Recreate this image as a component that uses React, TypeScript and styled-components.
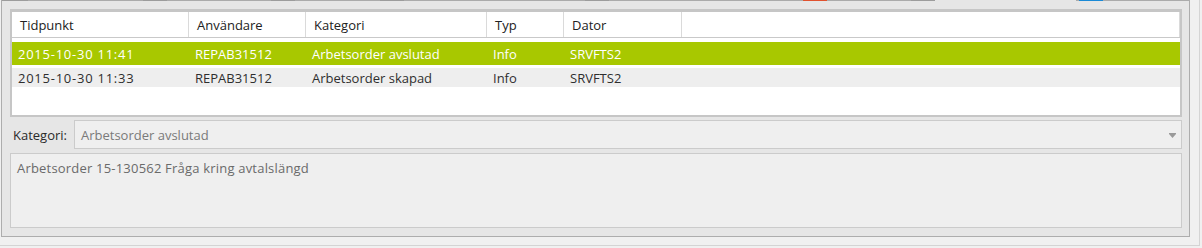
import React from "react";
import styled, { createGlobalStyle } from "styled-components";

const GlobalStyle = createGlobalStyle`
  html, body { margin: 0; padding: 0; background: #f0f0f0; }
  body { font-family: "Open Sans", "Noto Sans", sans-serif; font-size: 13px; }
  * { box-sizing: border-box; }
`;

const Frame = styled.div`
  width: 1200px;
  height: 246px;
  padding-left: 1px;
  border-right: 1px solid #d4d4d4;
  border-bottom: 1px solid #d4d4d4;
`;

const Panel = styled.div`
  width: 1189px;
  height: 237px;
  background: #e6e6e6;
  border-left: 1px solid #adadad;
  border-right: 1px solid #adadad;
  border-bottom: 1px solid #adadad;
  display: flex;
  flex-direction: column;
`;

const TopEdge = styled.div`
  height: 1px;
  display: flex;
  flex: none;
`;

const Segment = styled.div<{ $w: number; $c: string }>`
  width: ${(p) => p.$w}px;
  height: 1px;
  background: ${(p) => p.$c};
  flex: none;
`;

const Content = styled.div`
  flex: 1;
  padding: 8px 7px 8px 8px;
  display: flex;
  flex-direction: column;
`;

const Grid = styled.div`
  height: 108px;
  flex: none;
  border: 2px solid #c6c6c6;
  border-top-width: 3px;
  background: #ffffff;
  display: flex;
  flex-direction: column;
`;

const HeaderRow = styled.div`
  height: 26px;
  display: flex;
  border-bottom: 1px solid #c9c9c9;
  flex: none;
`;

const HeaderCell = styled.div<{ $w?: number }>`
  ${(p) => (p.$w ? `width: ${p.$w}px; flex: none;` : "flex: 1;")}
  border-right: 1px solid #dadada;
  padding-left: 8px;
  display: flex;
  align-items: center;
  color: #222;
  white-space: nowrap;
`;

const Rows = styled.div`
  flex: 1;
  padding-top: 4px;
  display: flex;
  flex-direction: column;
`;

const Row = styled.div<{ $selected?: boolean }>`
  display: flex;
  flex: none;
  height: ${(p) => (p.$selected ? 23 : 19)}px;
  margin-top: ${(p) => (p.$selected ? 0 : 3)}px;
  background: ${(p) => (p.$selected ? "#a8c800" : "#eeeeee")};
  color: ${(p) => (p.$selected ? "#ffffff" : "#2e2e2e")};
`;

const Cell = styled.div<{ $w?: number; $spacing?: number }>`
  ${(p) => (p.$w ? `width: ${p.$w}px; flex: none;` : "flex: 1;")}
  padding-left: 6px;
  display: flex;
  align-items: center;
  white-space: nowrap;
  letter-spacing: ${(p) => p.$spacing ?? 0}px;
`;

const FieldRow = styled.div`
  margin-top: 3px;
  height: 29px;
  display: flex;
  align-items: center;
  flex: none;
`;

const Label = styled.div`
  width: 64px;
  padding-left: 3px;
  color: #2a2a2a;
  flex: none;
`;

const Combo = styled.div`
  flex: 1;
  height: 29px;
  border: 1px solid #cbcbcb;
  background: #efefef;
  display: flex;
  align-items: center;
  padding: 0 5px 0 6px;
  color: #7a7a7a;
`;

const ComboText = styled.span`
  flex: 1;
`;

const Arrow = styled.svg`
  width: 7px;
  height: 5px;
  flex: none;
  margin-top: 1px;
`;

const TextBox = styled.div`
  margin-top: 4px;
  height: 75px;
  flex: none;
  border: 1px solid #cbcbcb;
  background: #efefef;
  padding: 5px 6px;
  color: #6a6a6a;
  line-height: 18px;
  letter-spacing: 0.2px;
`;

const edge: [number, string][] = [
  [26, "#9c9c9c"],
  [115, "#ababab"],
  [24, "#9c9c9c"],
  [104, "#ababab"],
  [24, "#9c9c9c"],
  [85, "#ababab"],
  [24, "#9c9c9c"],
  [181, "#ababab"],
  [24, "#9c9c9c"],
  [194, "#ababab"],
  [24, "#e0522f"],
  [84, "#ababab"],
  [24, "#9c9c9c"],
  [141, "#e6e6e6"],
  [3, "#ababab"],
  [24, "#1b8ad6"],
  [86, "#ababab"],
];

const cols = [
  { w: 177, title: "Tidpunkt", spacing: 0.75 },
  { w: 117, title: "Användare", spacing: 0 },
  { w: 181, title: "Kategori", spacing: 0 },
  { w: 77, title: "Typ", spacing: 0 },
  { w: 118, title: "Dator", spacing: 0 },
];

const data = [
  ["2015-10-30 11:41", "REPAB31512", "Arbetsorder avslutad", "Info", "SRVFTS2"],
  ["2015-10-30 11:33", "REPAB31512", "Arbetsorder skapad", "Info", "SRVFTS2"],
];

export default function App() {
  return (
    <>
      <GlobalStyle />
      <Frame>
        <Panel>
          <TopEdge>
            {edge.map(([w, c], i) => (
              <Segment key={i} $w={w} $c={c} />
            ))}
          </TopEdge>
          <Content>
            <Grid>
              <HeaderRow>
                {cols.map((c) => (
                  <HeaderCell key={c.title} $w={c.w}>
                    {c.title}
                  </HeaderCell>
                ))}
                <HeaderCell />
              </HeaderRow>
              <Rows>
                {data.map((r, i) => (
                  <Row key={i} $selected={i === 0}>
                    {r.map((v, j) => (
                      <Cell key={j} $w={cols[j].w} $spacing={cols[j].spacing}>
                        {v}
                      </Cell>
                    ))}
                    <Cell />
                  </Row>
                ))}
              </Rows>
            </Grid>
            <FieldRow>
              <Label>Kategori:</Label>
              <Combo>
                <ComboText>Arbetsorder avslutad</ComboText>
                <Arrow viewBox="0 0 7 5">
                  <path d="M0 0H7V1L3.5 5L0 1Z" fill="#9a9a9a" />
                </Arrow>
              </Combo>
            </FieldRow>
            <TextBox>Arbetsorder 15-130562 Fråga kring avtalslängd</TextBox>
          </Content>
        </Panel>
      </Frame>
    </>
  );
}
